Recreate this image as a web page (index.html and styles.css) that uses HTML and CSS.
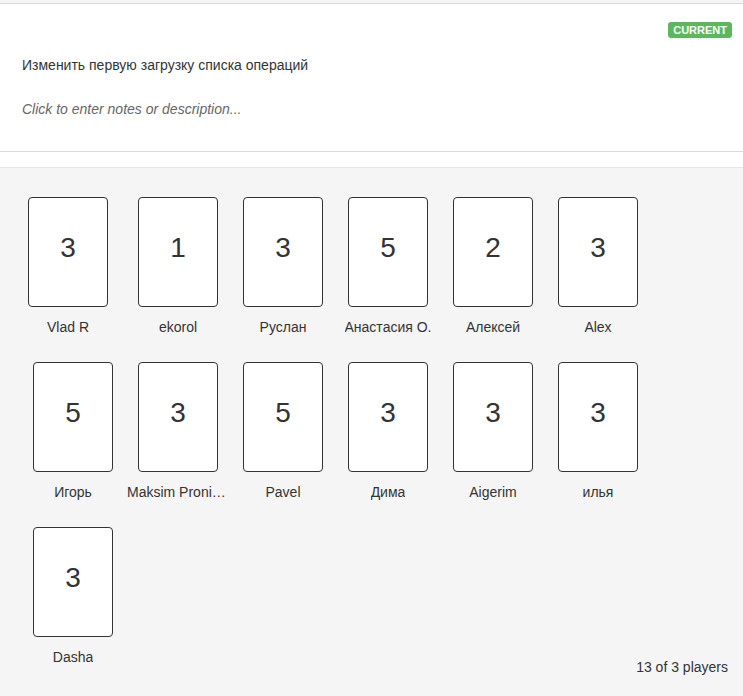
FILE: index.html
```html
<!DOCTYPE html>
<html lang="ru">
<head>
    <meta charset="UTF-8">
    <meta name="viewport" content="width=device-width, initial-scale=1.0">
    <title>Planning Poker - Story</title>
    <link rel="stylesheet" href="styles.css">
</head>
<body>
    <div class="story">
        <div class="story-head">
            <span class="badge">CURRENT</span>
        </div>
        <div class="story-title">Изменить первую загрузку списка операций</div>
        <div class="story-notes">Click to enter notes or description...</div>
    </div>
    <div class="story-gap"></div>

    <div class="table">
        <div class="player-list">
            <div class="player first"><div class="card">3</div><div class="name">Vlad R</div></div>
            <div class="player"><div class="card">1</div><div class="name">ekorol</div></div>
            <div class="player"><div class="card">3</div><div class="name">Руслан</div></div>
            <div class="player"><div class="card">5</div><div class="name">Анастасия О.</div></div>
            <div class="player"><div class="card">2</div><div class="name">Алексей</div></div>
            <div class="player"><div class="card">3</div><div class="name">Alex</div></div>
            <div class="player"><div class="card">5</div><div class="name">Игорь</div></div>
            <div class="player"><div class="card">3</div><div class="name">Maksim Pronichev</div></div>
            <div class="player"><div class="card">5</div><div class="name">Pavel</div></div>
            <div class="player"><div class="card">3</div><div class="name">Дима</div></div>
            <div class="player"><div class="card">3</div><div class="name">Aigerim</div></div>
            <div class="player"><div class="card">3</div><div class="name">илья</div></div>
            <div class="player"><div class="card">3</div><div class="name">Dasha</div></div>
        </div>
        <div class="player-count">13 of 3 players</div>
    </div>
</body>
</html>
```

FILE: styles.css
```css
body {
    margin: 0;
    font-family: "Liberation Sans", Arial, sans-serif;
    font-size: 14px;
    color: #333;
    background-color: #f5f5f5;
}
.story {
    background-color: #fff;
    margin-top: 3px;
    border-top: 1px solid #dcdcdc;
    border-bottom: 1px solid #dcdcdc;
    padding: 18px 11px 0 22px;
    height: 129px;
}
.story-head {
    display: flex;
    justify-content: flex-end;
}
.badge {
    background-color: #5cb85c;
    color: white;
    font-size: 11px;
    font-weight: bold;
    line-height: 16px;
    padding: 0 5px;
    border-radius: 3px;
}
.story-title {
    margin-top: 19px;
    line-height: 16px;
}
.story-notes {
    margin-top: 28px;
    line-height: 16px;
    font-style: italic;
    color: #666;
}
.story-gap {
    background-color: #fff;
    height: 15px;
    border-bottom: 1px solid #e6e6e6;
}
.table {
    padding: 29px 15px 0 23px;
}
.player-list {
    display: flex;
    flex-wrap: wrap;
    column-gap: 5px;
    row-gap: 27px;
}
.player {
    width: 100px;
    display: flex;
    flex-direction: column;
    align-items: center;
}
.player.first {
    margin-left: -5px;
    margin-right: 5px;
}
.card {
    width: 78px;
    height: 74px;
    padding-top: 34px;
    background-color: #fff;
    border: 1px solid #333;
    border-radius: 4px;
    font-size: 28px;
    line-height: 32px;
    text-align: center;
}
.name {
    margin-top: 12px;
    line-height: 16px;
    max-width: 102px;
    text-align: center;
    white-space: nowrap;
    overflow: hidden;
    text-overflow: ellipsis;
}
.player-count {
    text-align: right;
    line-height: 16px;
    margin-top: -6px;
    padding-bottom: 21px;
}
```
